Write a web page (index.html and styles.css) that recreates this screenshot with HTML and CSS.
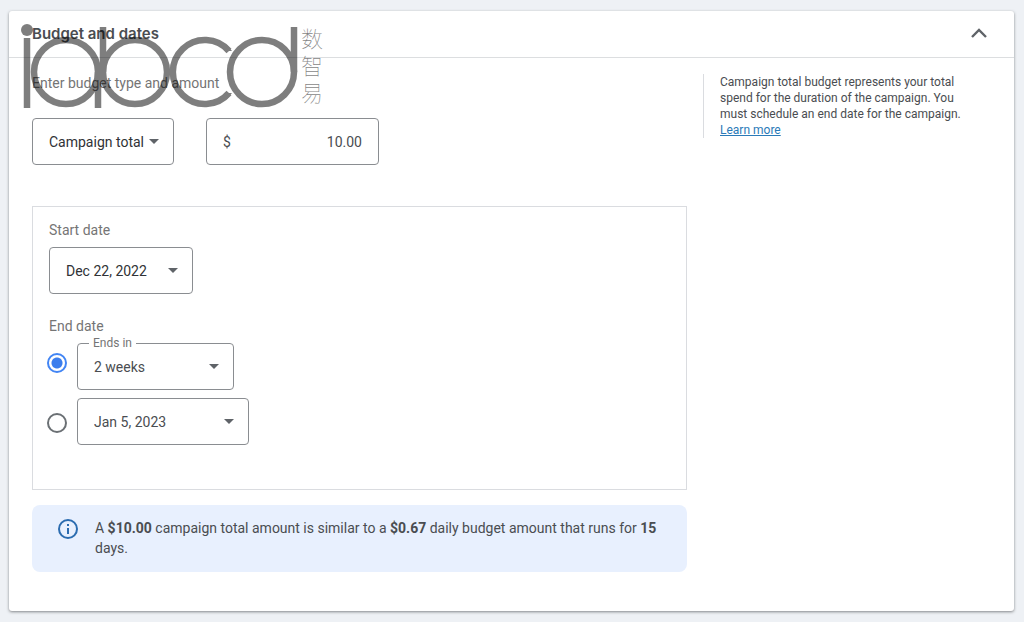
FILE: index.html
```html
<!DOCTYPE html>
<html lang="en">
<head>
    <meta charset="UTF-8">
    <meta name="viewport" content="width=device-width, initial-scale=1.0">
    <title>Budget and dates</title>
    <link rel="stylesheet" href="styles.css">
</head>
<body>
    <section class="card">
        <header class="card-header">
            <h2>Budget and dates</h2>
            <button type="button" class="collapse" aria-label="Collapse">
                <svg width="18" height="12" viewBox="0 0 18 12"><path d="M2 9 L9 2 L16 9" fill="none" stroke="#5f6368" stroke-width="2.4"/></svg>
            </button>
        </header>

        <div class="card-body">
            <main>
                <label class="caption" for="budgetType">Enter budget type and amount</label>
                <div class="budget-row">
                    <div class="select select-type">
                        <select id="budgetType">
                            <option>Campaign total</option>
                            <option>Daily</option>
                        </select>
                    </div>
                    <div class="amount">
                        <label for="amount">$</label>
                        <input type="text" id="amount" value="10.00">
                    </div>
                </div>

                <div class="panel">
                    <label class="caption" for="startDate">Start date</label>
                    <div class="select select-start">
                        <select id="startDate">
                            <option>Dec 22, 2022</option>
                        </select>
                    </div>

                    <p class="caption">End date</p>
                    <div class="end-date">
                        <div class="radios">
                            <input type="radio" name="end" aria-label="Ends in" checked>
                            <input type="radio" name="end" aria-label="End on date">
                        </div>
                        <div class="choices">
                            <div class="select select-weeks">
                                <label class="floating" for="endsIn">Ends in</label>
                                <select id="endsIn">
                                    <option>2 weeks</option>
                                </select>
                            </div>
                            <div class="select select-end">
                                <select aria-label="End date">
                                    <option>Jan 5, 2023</option>
                                </select>
                            </div>
                        </div>
                    </div>
                </div>

                <div class="info">
                    <svg width="22" height="22" viewBox="0 0 22 22">
                        <circle cx="11" cy="11" r="9" fill="none" stroke="#2b6cb0" stroke-width="2"/>
                        <rect x="10" y="6" width="2" height="2" fill="#2b6cb0"/>
                        <rect x="10" y="10" width="2" height="6" fill="#2b6cb0"/>
                    </svg>
                    <p>A <b>$10.00</b> campaign total amount is similar to a <b>$0.67</b> daily budget amount that runs for <b>15</b> days.</p>
                </div>
            </main>

            <aside>
                <p>Campaign total budget represents your total spend for the duration of the campaign. You must schedule an end date for the campaign. <a href="#">Learn more</a></p>
            </aside>
        </div>
    </section>

    <!-- watermark -->
    <div class="watermark">
        <svg width="280" height="86" viewBox="0 0 280 86">
            <g fill="none" stroke="#000" stroke-width="6.5">
                <circle cx="6" cy="8" r="6" fill="#000" stroke="none"/>
                <path d="M6 16 V86"/>
                <circle cx="45" cy="50" r="32"/>
                <path d="M77 50 V86"/>
                <path d="M82 5 V50"/>
                <circle cx="114" cy="50" r="32"/>
                <path d="M208 29 A32 32 0 1 0 208 71"/>
                <path d="M203 29 H211 L206 23 Z M203 71 H211 L206 77 Z" fill="#000" stroke="none"/>
                <circle cx="241" cy="50" r="32"/>
                <path d="M273 5 V50"/>
            </g>
        </svg>
        <div class="watermark-text">数<br>智<br>易</div>
    </div>
</body>
</html>
```

FILE: styles.css
```css
* {
    box-sizing: border-box;
}

body {
    margin: 0;
    padding: 11px 10px 11px 9px;
    background: #eef1f5;
    font-family: Roboto, "Liberation Sans", sans-serif;
    font-size: 14px;
    line-height: 20px;
    color: #4a4d51;
}

h2, p {
    margin: 0;
}

.card {
    background: #fff;
    border-radius: 3px;
    box-shadow: 0 1px 3px rgba(60, 64, 67, 0.6);
}

.card-header {
    display: flex;
    align-items: center;
    justify-content: space-between;
    height: 47px;
    padding: 0 24px 0 23px;
    border-bottom: 1px solid #dcdee0;
}

.card-header h2 {
    font-family: Inter, Roboto, sans-serif;
    font-size: 15px;
    font-weight: 600;
}

.collapse {
    display: flex;
    padding: 2px;
    border: none;
    background: none;
    cursor: pointer;
}

.card-body {
    display: grid;
    grid-template-columns: 1fr 287px;
    gap: 16px;
    align-items: start;
    padding: 15px 24px 39px 23px;
}

.caption {
    display: block;
    color: #757575;
}

.budget-row {
    display: flex;
    gap: 32px;
    margin-top: 25px;
}

.select {
    position: relative;
}

.select::after {
    content: "";
    position: absolute;
    right: 15px;
    top: 21px;
    border: 5px solid transparent;
    border-top-color: #5f6368;
    border-bottom: none;
    pointer-events: none;
}

select, .amount {
    width: 100%;
    height: 47px;
    padding: 0 16px;
    border: 1px solid #8a8d91;
    border-radius: 4px;
    background: #fff;
    color: #4a4d51;
    font: inherit;
}

select {
    appearance: none;
}

.select-type {
    width: 142px;
}

.select-type select, .select-start select {
    color: #303236;
}

.select-start {
    width: 144px;
    margin: 7px 0 22px;
}

.select-weeks {
    width: 157px;
}

.select-end {
    width: 172px;
}

.amount {
    display: flex;
    align-items: center;
    width: 173px;
}

.amount input {
    flex: 1;
    min-width: 0;
    padding: 0;
    border: none;
    outline: none;
    font: inherit;
    color: inherit;
    text-align: right;
}

.panel {
    margin-top: 41px;
    padding: 13px 16px 44px;
    border: 1px solid #dadce0;
}

.end-date {
    display: flex;
    gap: 10px;
    margin-top: 7px;
}

.radios {
    display: flex;
    flex-direction: column;
    justify-content: center;
    gap: 40px;
    margin-left: -2px;
    padding-bottom: 2px;
}

.radios input {
    appearance: none;
    width: 20px;
    height: 20px;
    margin: 0;
    border: 2px solid #6b7074;
    border-radius: 50%;
}

.radios input:checked {
    border-color: #4285f4;
    background: radial-gradient(circle, #3b7ded 5px, #fff 6px);
}

.choices {
    display: flex;
    flex-direction: column;
    gap: 8px;
}

.floating {
    position: absolute;
    left: 12px;
    top: -8px;
    padding: 0 4px;
    background: #fff;
    color: #757575;
    font-size: 12px;
    line-height: 16px;
}

.info {
    display: flex;
    gap: 16px;
    margin-top: 15px;
    padding: 13px 16px 14px 25px;
    border-radius: 8px;
    background: #e8f0fe;
}

.info svg {
    flex: none;
}

.info b {
    font-weight: 700;
}

aside {
    margin-top: 1px;
    padding: 0 16px;
    border-left: 1px solid #dadce0;
    font-size: 12px;
    line-height: 16px;
}

aside a {
    color: #2a7ab8;
}

.watermark {
    position: absolute;
    left: 21px;
    top: 22px;
    display: flex;
    opacity: 0.5;
    color: #000;
    pointer-events: none;
}

.watermark-text {
    font-family: "Noto Sans CJK SC", sans-serif;
    font-size: 22px;
    font-weight: 100;
    line-height: 27px;
    padding-top: 2px;
}
```
